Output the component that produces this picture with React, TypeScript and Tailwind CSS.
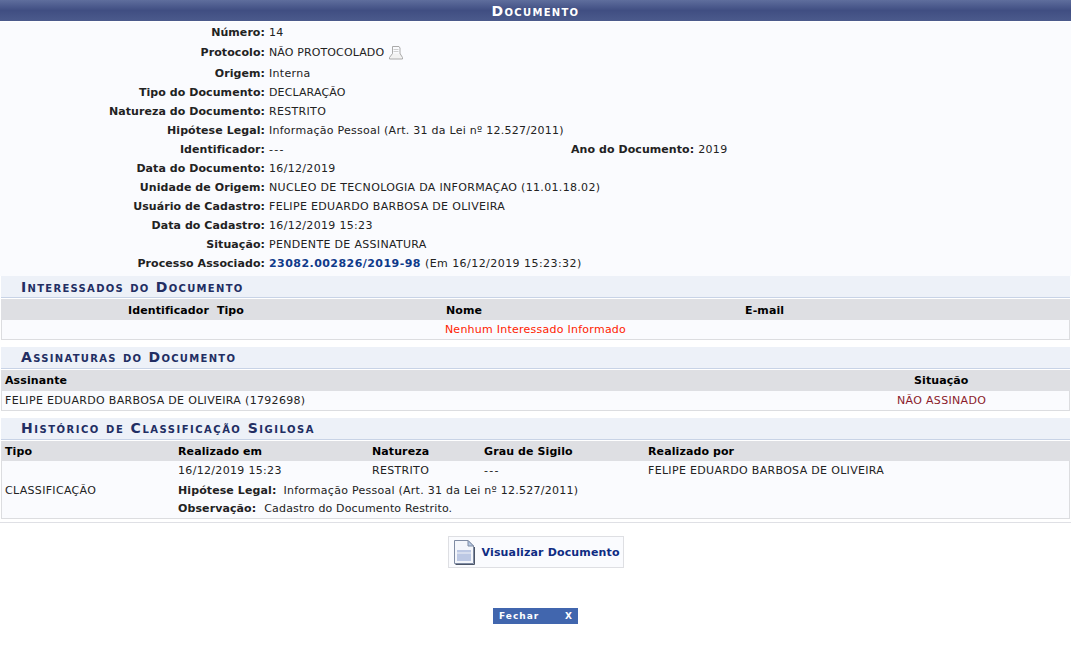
import React from "react";

function Row({ label, children, h = "h-[19px]" }: { label: string; children: React.ReactNode; h?: string }) {
  return (
    <div className={`flex items-center ${h}`}>
      <div className="w-[265px] shrink-0 text-right font-bold tracking-[0.07px]">{label}:</div>
      <div className="pl-[4px] flex-1 flex items-center">{children}</div>
    </div>
  );
}

function Section({ title, extra = "tracking-[1.3px]" }: { title: string; extra?: string }) {
  return (
    <div className={`h-[22px] mb-[1px] mx-[1px] bg-[#edf1f8] border-b border-[#c8d3e6] pl-[20px] flex items-center text-[#222e63] font-bold text-[14px] [font-variant:small-caps] ${extra}`}>
      {title}
    </div>
  );
}

export default function App() {
  return (
    <div className="w-[1071px] h-[645px] bg-white text-[11px] leading-[14px] tracking-[0.32px] text-[#222222] overflow-hidden font-['DejaVu_Sans','Liberation_Sans',sans-serif]">
      <div className="h-[22px] border-b border-white bg-gradient-to-b from-[#5f6e9d] via-[#404e82] to-[#4b5a8c] text-white text-center font-bold tracking-[1.3px] text-[14px] [font-variant:small-caps] flex items-center justify-center">
        Documento
      </div>
      <div className="bg-[#fafbfe] pt-[1px] h-[254px]">
        <Row label="Número">14</Row>
        <Row label="Protocolo" h="h-[22px]">
          <span className="tracking-[0.12px]">NÃO PROTOCOLADO</span>
          <svg className="ml-[5px] mb-[2px]" width="14" height="15" viewBox="0 0 14 15" fill="none" stroke="#aaaaaa" strokeWidth="1">
            <path d="M3.5 10V1.5H10L11 3V10" />
            <path d="M4.5 4.5H9.5M4.5 6.5H9.5" stroke="#cfcfcf" />
            <path d="M3.5 8.5L0.5 12.5V14H13.5V12.5L11 8.5" fill="#f2f2f2" />
          </svg>
        </Row>
        <Row label="Origem">Interna</Row>
        <Row label="Tipo do Documento"><span className="tracking-[0.12px]">DECLARAÇÃO</span></Row>
        <Row label="Natureza do Documento">RESTRITO</Row>
        <Row label="Hipótese Legal"><span className="tracking-[0.26px]">Informação Pessoal (Art. 31 da Lei nº 12.527/2011)</span></Row>
        <Row label="Identificador">
          <span className="w-[302px] tracking-[1.3px]">---</span>
          <span className="font-bold tracking-[0.07px]">Ano do Documento:</span>
          <span className="ml-[4px]">2019</span>
        </Row>
        <Row label="Data do Documento">16/12/2019</Row>
        <Row label="Unidade de Origem">NUCLEO DE TECNOLOGIA DA INFORMAÇAO (11.01.18.02)</Row>
        <Row label="Usuário de Cadastro">FELIPE EDUARDO BARBOSA DE OLIVEIRA</Row>
        <Row label="Data do Cadastro">16/12/2019 15:23</Row>
        <Row label="Situação">PENDENTE DE ASSINATURA</Row>
        <Row label="Processo Associado">
          <span className="font-bold text-[#0f3a8a] tracking-[0.45px]">23082.002826/2019-98</span>
          <span className="ml-[4px] tracking-[0.45px]">(Em 16/12/2019 15:23:32)</span>
        </Row>
      </div>

      <Section title="Interessados do Documento" />
      <div className="mx-[1px] border-x border-b border-[#dcdde0]">
        <div className="h-[21px] pt-[2px] bg-[#dedfe3] flex items-center font-bold tracking-[0.1px] text-black -mx-[1px]">
          <span className="w-[243px] text-right">Identificador&nbsp; Tipo</span>
          <span className="ml-[202px]">Nome</span>
          <span className="ml-[263px]">E-mail</span>
        </div>
        <div className="h-[19px] bg-[#fafbfe] flex items-center justify-center tracking-[0.25px] text-[#ff2200]">Nenhum Interessado Informado</div>
      </div>

      <div className="h-[7px]" />
      <Section title="Assinaturas do Documento" extra="tracking-[1.3px] pb-[2px]" />
      <div className="mx-[1px] border-x border-b border-[#dcdde0]">
        <div className="h-[21px] bg-[#dedfe3] flex items-center font-bold tracking-[0.1px] text-black -mx-[1px] pl-[4px]">
          <span className="w-[909px]">Assinante</span>
          <span>Situação</span>
        </div>
        <div className="h-[19px] bg-[#fafbfe] flex items-center pl-[3px]">
          <span className="w-[892px]">FELIPE EDUARDO BARBOSA DE OLIVEIRA (1792698)</span>
          <span className="text-[#8b1a2b]">NÃO ASSINADO</span>
        </div>
      </div>

      <div className="h-[7px]" />
      <Section title="Histórico de Classificação Sigilosa" extra="tracking-[1.5px] pb-[2px]" />
      <div className="mx-[1px] border-x border-b border-[#dcdde0]">
        <div className="h-[20px] pt-[2px] bg-[#dedfe3] flex items-center font-bold tracking-[0.1px] text-black -mx-[1px] pl-[4px]">
          <span className="w-[173px]">Tipo</span>
          <span className="w-[194px]">Realizado em</span>
          <span className="w-[112px]">Natureza</span>
          <span className="w-[164px]">Grau de Sigilo</span>
          <span>Realizado por</span>
        </div>
        <div className="bg-[#fafbfe] flex items-center pl-[3px] h-[57px]">
          <span className="w-[173px] pt-[3px]">CLASSIFICAÇÃO</span>
          <div className="flex flex-col">
            <div className="h-[19px] flex items-center">
              <span className="w-[194px]">16/12/2019 15:23</span>
              <span className="w-[112px]">RESTRITO</span>
              <span className="w-[164px] tracking-[1.3px]">---</span>
              <span>FELIPE EDUARDO BARBOSA DE OLIVEIRA</span>
            </div>
            <div className="h-[19px] pt-[2px] flex items-center">
              <span className="font-bold tracking-[0.1px] mr-[7px]">Hipótese Legal:</span>
              <span className="tracking-[0.26px]">Informação Pessoal (Art. 31 da Lei nº 12.527/2011)</span>
            </div>
            <div className="h-[19px] flex items-center">
              <span className="font-bold tracking-[0.1px] mr-[8px]">Observação:</span>
              <span className="tracking-[0.16px]">Cadastro do Documento Restrito.</span>
            </div>
          </div>
        </div>
      </div>
      <div className="h-[1px] mt-[3px] bg-[#dfe0e5]" />

      <div className="flex justify-center mt-[13px]">
        <div className="w-[176px] h-[32px] bg-[#fafbfe] border border-[#dedfe3] flex items-center pl-[4px]">
          <svg width="22" height="26" viewBox="0 0 22 26">
            <path d="M1.5 1.5H15L20.5 7V24.5H1.5Z" fill="#f4f6fb" stroke="#7f8ba3" />
            <path d="M15 1.5V7H20.5Z" fill="#b7cbe6" stroke="#7f8ba3" />
            <rect x="4" y="11" width="14" height="11" fill="#bcc8e4" />
            <path d="M4 14H18" stroke="#f0f2f8" />
            <path d="M2.5 25.5H21.5V8" fill="none" stroke="#4b5568" />
          </svg>
          <span className="ml-[7px] pt-[1px] font-bold tracking-[0.15px] text-[#0f2c82]">Visualizar Documento</span>
        </div>
      </div>

      <div className="flex justify-center mt-[40px]">
        <div className="w-[85px] h-[16px] bg-[#4166ae] text-white font-bold text-[9px] flex items-center justify-between pl-[6px] pr-[5px] tracking-[1px]">
          <span>Fechar</span>
          <span>X</span>
        </div>
      </div>
    </div>
  );
}
